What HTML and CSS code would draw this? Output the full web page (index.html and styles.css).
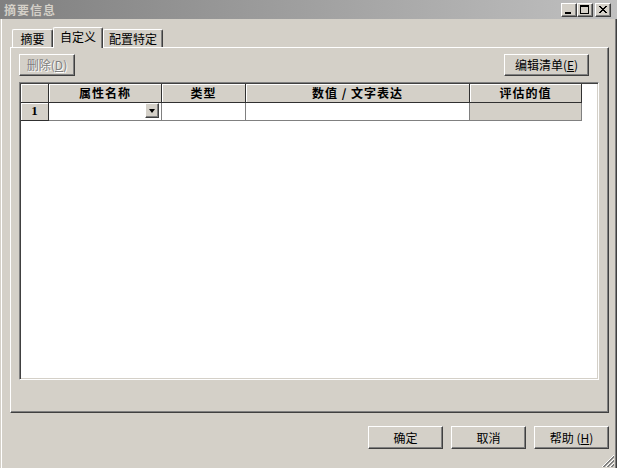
FILE: index.html
```html
<!DOCTYPE html>
<html lang="zh-CN">
  <head>
    <meta charset="UTF-8" />
    <meta name="viewport" content="width=device-width, initial-scale=1.0" />
    <title>摘要信息</title>
    <link rel="stylesheet" href="styles.css">
  </head>
  <body>
    <div class="window">
      <div class="titlebar">
        <span class="title">摘要信息</span>
        <div class="caption-btns">
          <span class="cap-btn">
            <svg width="14" height="12" viewBox="0 0 14 12" shape-rendering="crispEdges"><rect x="3" y="8" width="6" height="2" fill="#000"/></svg>
          </span>
          <span class="cap-btn">
            <svg width="14" height="12" viewBox="0 0 14 12" shape-rendering="crispEdges" fill="#000">
              <rect x="2" y="1" width="9" height="2"/>
              <rect x="2" y="3" width="1" height="7"/>
              <rect x="10" y="3" width="1" height="7"/>
              <rect x="2" y="9" width="9" height="1"/>
            </svg>
          </span>
          <span class="cap-btn close">
            <svg width="14" height="12" viewBox="0 0 14 12" shape-rendering="crispEdges" fill="#000">
              <rect x="3" y="2" width="2" height="1"/><rect x="9" y="2" width="2" height="1"/>
              <rect x="4" y="3" width="2" height="1"/><rect x="8" y="3" width="2" height="1"/>
              <rect x="5" y="4" width="4" height="1"/>
              <rect x="6" y="5" width="2" height="1"/>
              <rect x="5" y="6" width="4" height="1"/>
              <rect x="4" y="7" width="2" height="1"/><rect x="8" y="7" width="2" height="1"/>
              <rect x="3" y="8" width="2" height="1"/><rect x="9" y="8" width="2" height="1"/>
            </svg>
          </span>
        </div>
      </div>
      <div class="client">
        <div class="tabs">
          <div class="tab tab-summary">摘要</div>
          <div class="tab tab-custom active">自定义</div>
          <div class="tab tab-config">配置特定</div>
        </div>
        <div class="panel">
          <div class="toolbar">
            <button class="btn btn-del" disabled>删除(<u>D</u>)</button>
            <button class="btn btn-edit">编辑清单(<u>E</u>)</button>
          </div>
          <div class="grid">
            <table>
              <thead>
                <tr>
                  <th class="c-num"></th>
                  <th class="c-name">属性名称</th>
                  <th class="c-type">类型</th>
                  <th class="c-value">数值 / 文字表达</th>
                  <th class="c-eval">评估的值</th>
                </tr>
              </thead>
              <tbody>
                <tr>
                  <td class="rownum">1</td>
                  <td>
                    <div class="combo">
                      <span class="combo-btn"><span class="arrow"></span></span>
                    </div>
                  </td>
                  <td></td>
                  <td></td>
                  <td class="eval"></td>
                </tr>
              </tbody>
            </table>
          </div>
        </div>
        <div class="footer">
          <button class="btn btn-foot">确定</button>
          <button class="btn btn-foot">取消</button>
          <button class="btn btn-foot">帮助 (<u>H</u>)</button>
        </div>
        <svg class="grip" width="13" height="13" viewBox="0 0 13 13">
          <line x1="13" y1="1" x2="1" y2="13" stroke="#fff"/>
          <line x1="13" y1="2" x2="2" y2="13" stroke="#808080"/>
          <line x1="13" y1="3" x2="3" y2="13" stroke="#808080"/>
          <line x1="13" y1="5" x2="5" y2="13" stroke="#fff"/>
          <line x1="13" y1="6" x2="6" y2="13" stroke="#808080"/>
          <line x1="13" y1="7" x2="7" y2="13" stroke="#808080"/>
          <line x1="13" y1="9" x2="9" y2="13" stroke="#fff"/>
          <line x1="13" y1="10" x2="10" y2="13" stroke="#808080"/>
          <line x1="13" y1="11" x2="11" y2="13" stroke="#808080"/>
        </svg>
      </div>
    </div>
  </body>
</html>
```

FILE: styles.css
```css
* {
  margin: 0;
  padding: 0;
  box-sizing: border-box;
}
body {
  background-color: #d4d0c8;
  font-family: "Noto Sans CJK SC", "Liberation Sans", sans-serif;
  font-size: 12px;
  color: #000;
}
.window {
  width: 617px;
  height: 468px;
  display: flex;
  flex-direction: column;
}
.titlebar {
  height: 19px;
  background: linear-gradient(to right, #808080, #c0c0c0);
  display: flex;
  align-items: center;
  padding: 0 6px 0 4px;
}
.title {
  flex: 1;
  color: #d4d0c8;
  font-weight: bold;
  letter-spacing: 1px;
  line-height: 14px;
}
.caption-btns {
  display: flex;
}
.cap-btn {
  width: 16px;
  height: 14px;
  background-color: #d4d0c8;
  border: 1px solid;
  border-color: #fff #404040 #404040 #fff;
  box-shadow: inset -1px -1px #808080;
  display: block;
}
.cap-btn svg {
  display: block;
}
.cap-btn.close {
  margin-left: 2px;
}
.client {
  flex: 1;
  position: relative;
  border-left: 1px solid #d4d0c8;
  border-right: 1px solid #404040;
  box-shadow: inset 1px 0 #fff, inset -1px 0 #808080;
  padding: 8px 7px 0 9px;
}
.tabs {
  display: flex;
  align-items: flex-end;
  height: 20px;
  padding-left: 2px;
  position: relative;
  z-index: 1;
}
.tab {
  height: 18px;
  border: 1px solid;
  border-bottom: none;
  border-color: #fff #404040 #fff #fff;
  box-shadow: inset -1px 0 #808080;
  border-radius: 2px 2px 0 0;
  background-color: #d4d0c8;
  display: flex;
  align-items: center;
  justify-content: center;
  line-height: 14px;
}
.tab.active {
  height: 21px;
  margin-bottom: -1px;
  padding-bottom: 2px;
}
.tab-summary {
  width: 41px;
}
.tab-custom {
  width: 50px;
}
.tab-config {
  width: 60px;
}
.panel {
  height: 366px;
  border: 1px solid;
  border-color: #fff #404040 #404040 #fff;
  box-shadow: inset -1px -1px #808080;
  padding: 6px 9px 0 8px;
}
.toolbar {
  display: flex;
  justify-content: space-between;
  height: 22px;
}
.btn {
  height: 22px;
  font: inherit;
  color: #000;
  background-color: #d4d0c8;
  border: 1px solid;
  border-color: #fff #404040 #404040 #fff;
  box-shadow: inset -1px -1px #808080;
  line-height: 18px;
  padding: 0;
}
.btn u {
  text-decoration: underline;
}
.btn:disabled {
  color: #808080;
  text-shadow: 1px 1px #fff;
}
.btn-del {
  width: 56px;
}
.btn-edit {
  width: 85px;
  margin-right: 10px;
}
.grid {
  margin-top: 6px;
  height: 298px;
  background-color: #fff;
  border: 1px solid;
  border-color: #808080 #fff #fff #808080;
  box-shadow: inset 1px 1px #404040, inset -1px -1px #d4d0c8;
  padding: 1px;
}
table {
  border-collapse: separate;
  border-spacing: 0;
  table-layout: fixed;
  width: 561px;
}
th {
  height: 19px;
  background-color: #d4d0c8;
  border-right: 1px solid #303030;
  border-bottom: 1px solid #303030;
  box-shadow: inset 1px 1px #fff;
  font-weight: bold;
  letter-spacing: 1px;
  line-height: 16px;
  padding: 0;
  text-align: center;
}
.c-num {
  width: 28px;
}
.c-name {
  width: 113px;
}
.c-type {
  width: 84px;
}
.c-value {
  width: 224px;
}
.c-eval {
  width: 112px;
}
td {
  height: 18px;
  background-color: #fff;
  border-right: 1px solid #808080;
  border-bottom: 1px solid #808080;
  padding: 0;
  vertical-align: top;
}
td.rownum {
  background-color: #d4d0c8;
  border-right-color: #303030;
  border-bottom-color: #303030;
  box-shadow: inset 1px 1px #fff;
  font-weight: bold;
  text-align: center;
  line-height: 16px;
  font-family: "Liberation Serif", serif;
  font-size: 13px;
}
td.eval {
  background-color: #d4d0c8;
}
.combo {
  display: flex;
  justify-content: flex-end;
  padding: 0 2px 0 0;
}
.combo-btn {
  width: 14px;
  height: 15px;
  background-color: #d4d0c8;
  border: 1px solid;
  border-color: #fff #404040 #404040 #fff;
  box-shadow: inset -1px -1px #808080;
  display: flex;
  align-items: center;
  justify-content: center;
}
.arrow {
  width: 0;
  height: 0;
  border-top: 4px solid #000;
  border-left: 3.5px solid transparent;
  border-right: 3.5px solid transparent;
}
.footer {
  display: flex;
  justify-content: flex-end;
  gap: 8px;
  padding-top: 13px;
}
.btn-foot {
  width: 75px;
  height: 23px;
}
.grip {
  position: absolute;
  right: 2px;
  bottom: 1px;
}
```
